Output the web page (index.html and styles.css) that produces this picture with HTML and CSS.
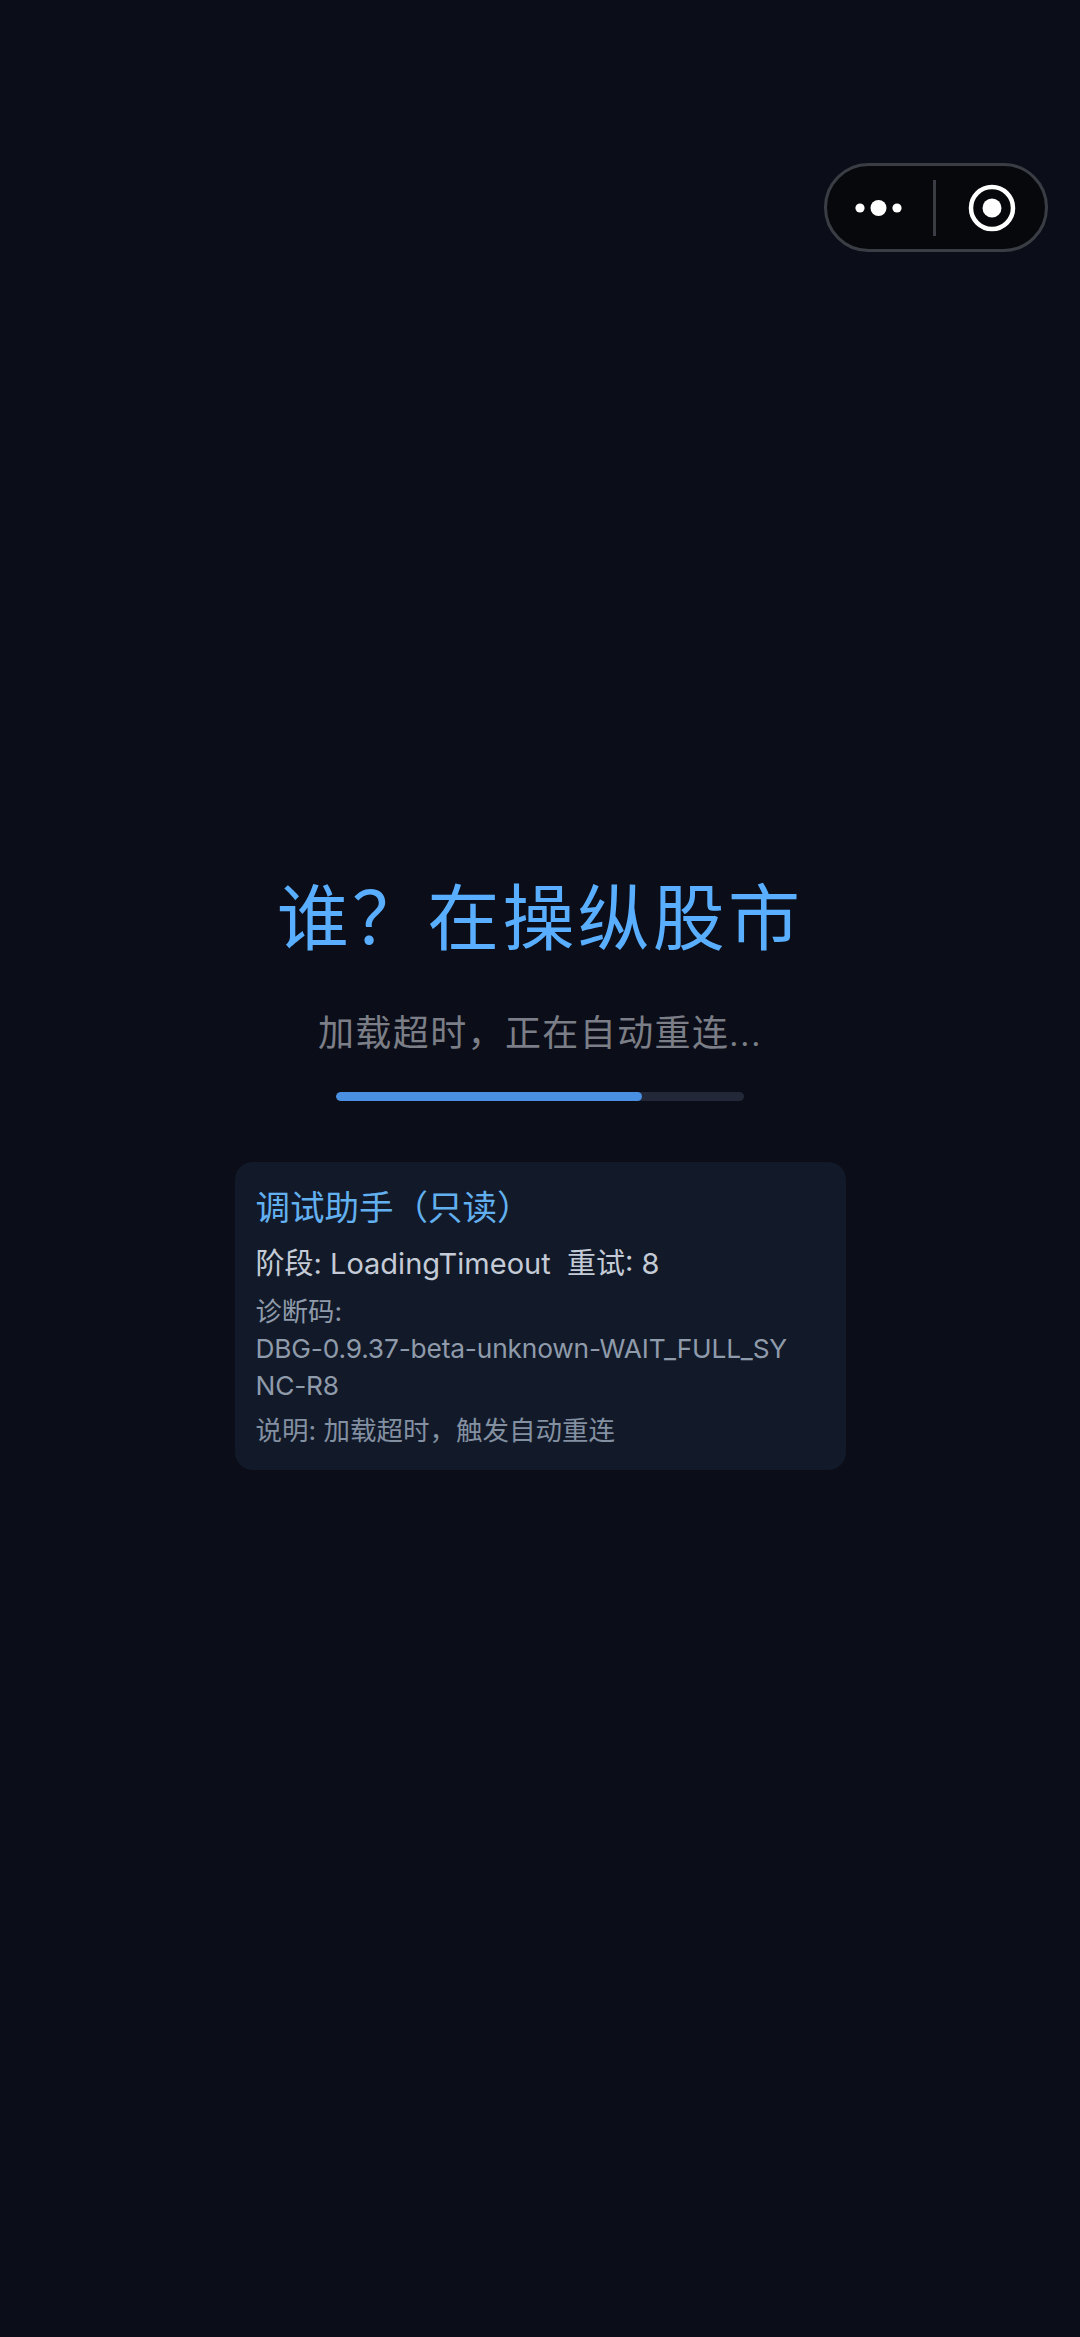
FILE: index.html
```html
<!DOCTYPE html>
<html lang="zh-CN">
<head>
<meta charset="utf-8">
<title>谁？在操纵股市</title>
<link rel="stylesheet" href="styles.css">
</head>
<body>
<div class="capsule">
  <svg class="capsule-more" width="60" height="20" viewBox="0 0 60 20"><circle cx="8" cy="10" r="4.6"/><circle cx="26.5" cy="10" r="8"/><circle cx="45" cy="10" r="4.6"/></svg>
  <span class="capsule-divider"></span>
  <svg class="capsule-record" width="50" height="50" viewBox="0 0 50 50"><circle class="ring" cx="25" cy="25" r="21"/><circle class="dot" cx="25" cy="25" r="9.5"/></svg>
</div>
<main class="loading">
  <h1 class="title">谁？在操纵股市</h1>
  <p class="subtitle">加载超时，正在自动重连...</p>
  <div class="progress"><div class="progress-fill" style="width:75%"></div></div>
  <section class="debug">
    <h2 class="debug-title">调试助手（只读）</h2>
    <p class="debug-line">阶段: LoadingTimeout&nbsp; 重试: 8</p>
    <p class="debug-code">诊断码: <span class="debug-code-value">DBG-0.9.37-beta-unknown-WAIT_FULL_SYNC-R8</span></p>
    <p class="debug-note">说明: 加载超时，触发自动重连</p>
  </section>
</main>
</body>
</html>
```
FILE: styles.css
```css
* { box-sizing: border-box; }
html, body { margin: 0; height: 100%; }
body {
  position: relative;
  background: #0b0e19;
  font-family: "Inter", "Noto Sans CJK SC", sans-serif;
  overflow: hidden;
}
.capsule {
  position: absolute;
  left: 824px;
  top: 163px;
  width: 224px;
  height: 89px;
  border: 3px solid #3b3d45;
  border-radius: 45px;
  background: #07080c;
  display: flex;
  align-items: center;
}
.capsule-more { fill: #fff; margin-left: 25px; flex: none; }
.capsule-divider { width: 3px; height: 56px; background: #3b3d45; margin-left: 21px; flex: none; }
.capsule-record { margin-left: 31px; flex: none; }
.ring { fill: none; stroke: #fff; stroke-width: 4.5; }
.dot { fill: #fff; }
.loading {
  display: flex;
  flex-direction: column;
  align-items: center;
  padding-top: 872px;
}
.title {
  margin: 0;
  font-size: 72px;
  line-height: 92px;
  font-weight: 400;
  letter-spacing: 3.2px;
  color: #5aaeff;
}
.subtitle {
  margin: 45px 0 0;
  font-family: "Roboto", "Noto Sans CJK SC", sans-serif;
  font-size: 36px;
  line-height: 50px;
  letter-spacing: 1.4px;
  color: #7b7e86;
}
.progress {
  width: 408px;
  height: 9px;
  margin-top: 33px;
  border-radius: 5px;
  background: #222838;
  overflow: hidden;
}
.progress-fill { height: 100%; border-radius: 5px; background: #4a90e2; }
.debug {
  width: 611px;
  margin-top: 61px;
  padding: 22px 50px 21px 21px;
  border-radius: 18px;
  background: #121a29;
}
.debug-title {
  margin: 0;
  font-size: 34.5px;
  line-height: 48px;
  font-weight: 400;
  color: #62b0f0;
}
.debug-line {
  margin: 10px 0 0;
  font-size: 29px;
  line-height: 44px;
  color: #c4cbd6;
}
.debug-code {
  margin: 7px 0 0;
  font-size: 26.3px;
  line-height: 37px;
  color: #8f9aaa;
  word-break: break-all;
}
.debug-code-value { display: block; letter-spacing: -0.17px; }
.debug-note {
  margin: 8px 0 0;
  font-size: 26.5px;
  line-height: 37px;
  color: #8390a1;
}
```
